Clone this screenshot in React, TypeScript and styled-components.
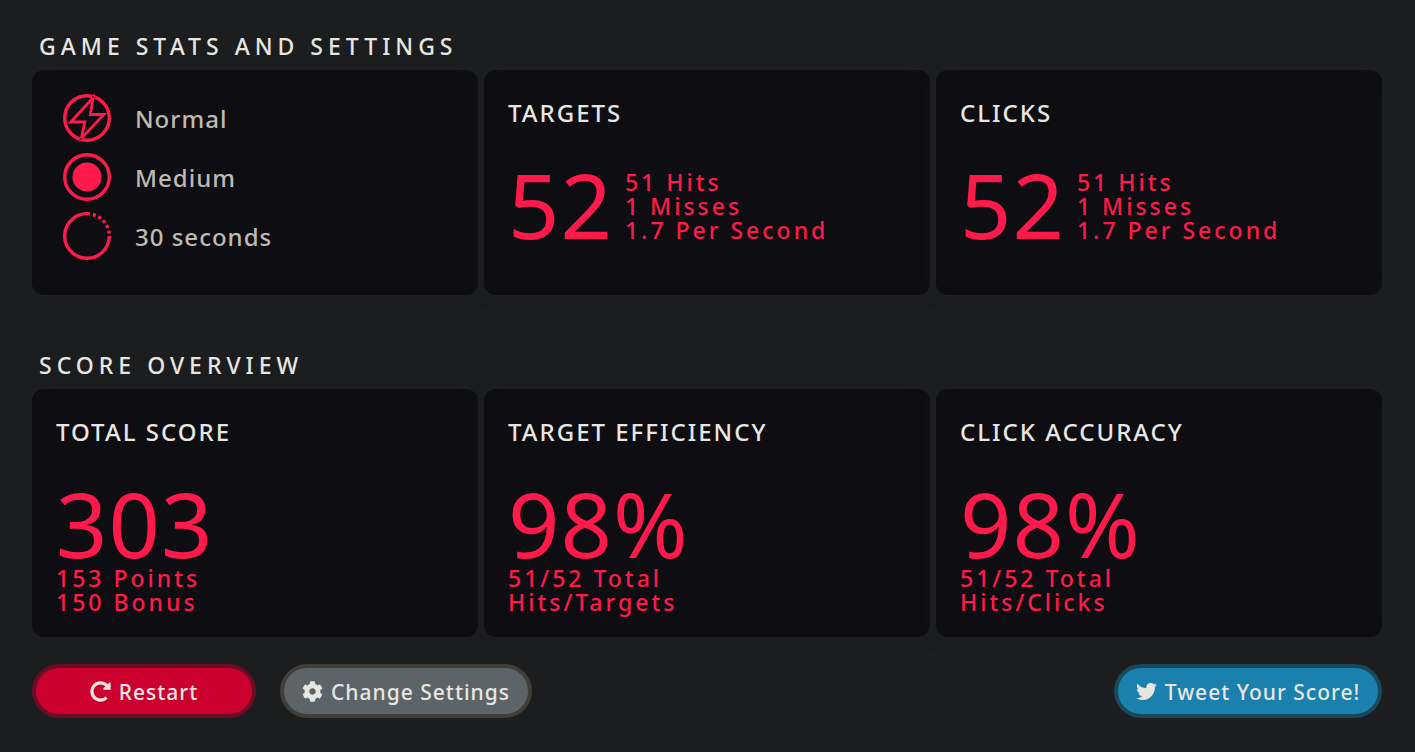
import React from "react";
import styled, { createGlobalStyle } from "styled-components";
import { FaCog, FaRedoAlt, FaTwitter } from "react-icons/fa";

const colors = {
  page: "#1b1d1e",
  card: "#0e0d12",
  accent: "#ff1a4b",
  heading: "#e8e6e1",
  muted: "#bfbab1",
};

const GlobalStyle = createGlobalStyle`
  * { box-sizing: border-box; }
  html { background: ${colors.page}; }
  body {
    margin: 0;
    color: ${colors.heading};
    font-family: "Noto Sans", "Open Sans", sans-serif;
    font-size: 24px;
    line-height: 24px;
  }
  h2, h3, p, ul { margin: 0; padding: 0; font-weight: 500; }
`;

const Page = styled.main`
  padding: 28px 33px 34px 32px;
`;

const Section = styled.section<{ $gap: number }>`
  margin-bottom: ${(p) => p.$gap}px;
`;

const SectionTitle = styled.h2`
  padding: 0 7px 6px;
  font-size: 23px;
  line-height: 36px;
  letter-spacing: 5px;
  text-transform: uppercase;
`;

const CardRow = styled.div`
  display: grid;
  grid-template-columns: repeat(3, 1fr);
  gap: 6px;
`;

const Card = styled.article<{ $tall?: boolean }>`
  min-height: ${(p) => (p.$tall ? 248 : 225)}px;
  padding: 24px 24px 23px;
  border-radius: 12px;
  background: ${colors.card};
  box-shadow: 0 0 16px rgba(36, 39, 40, 0.4);
`;

const CardTitle = styled.h3`
  margin-bottom: 36px;
  font-size: 24px;
  line-height: 38px;
  letter-spacing: 2px;
  text-transform: uppercase;
`;

const OptionList = styled.ul`
  display: flex;
  flex-direction: column;
  gap: 11px;
  padding-left: 7px;
  list-style: none;
`;

const Option = styled.li`
  display: flex;
  align-items: center;
  gap: 24px;
  color: ${colors.muted};
  font-weight: 500;
  letter-spacing: 1px;

  svg {
    width: 48px;
    height: 48px;
    fill: none;
    stroke: ${colors.accent};
    stroke-width: 3.4;
  }
`;

const OptionLabel = styled.span`
  padding-top: 2px;
`;

const Details = styled.p`
  font-size: 23px;
  line-height: 24px;
  letter-spacing: 3px;
  white-space: pre-line;
`;

const Stat = styled.div<{ $stacked?: boolean }>`
  display: flex;
  flex-direction: ${(p) => (p.$stacked ? "column" : "row")};
  gap: ${(p) => (p.$stacked ? 7 : 12)}px;
  color: ${colors.accent};

  ${Details} {
    padding-top: ${(p) => (p.$stacked ? 0 : 2)}px;
  }
`;

const Big = styled.p`
  font-size: 90px;
  line-height: 72px;
  letter-spacing: 1px;
  font-weight: 450;
`;

const Actions = styled.footer`
  display: flex;
  gap: 24px;
`;

const Button = styled.button<{ $bg: string; $edge: string; $width: number; $end?: boolean }>`
  display: flex;
  align-items: center;
  justify-content: center;
  gap: 8px;
  width: ${(p) => p.$width}px;
  height: 54px;
  margin-left: ${(p) => (p.$end ? "auto" : "0")};
  padding: 0;
  border: 4px solid ${(p) => p.$edge};
  border-radius: 27px;
  background: ${(p) => p.$bg};
  color: ${colors.heading};
  font: 500 21px/24px "Noto Sans", "Open Sans", sans-serif;
  letter-spacing: 1px;
  white-space: nowrap;
  cursor: pointer;

  svg {
    width: 21px;
    height: 21px;
  }
`;

const ButtonLabel = styled.span`
  padding-top: 2px;
`;

const BoltIcon = () => (
  <svg viewBox="0 0 48 48" aria-hidden="true">
    <circle cx="24" cy="24" r="22.3" />
    <path d="M30 3.8 7.8 28H21.8L18.4 44.2 41 20.5H27.4Z" strokeWidth="2.8" />
    <path d="M29 2.6 31.6 3.6M16.6 44.6 19.2 45.4" stroke={colors.card} strokeWidth="1" />
  </svg>
);

const TargetIcon = () => (
  <svg viewBox="0 0 48 48" aria-hidden="true">
    <circle cx="24" cy="24" r="22.3" />
    <circle cx="24" cy="24" r="14.5" fill={colors.accent} stroke="none" />
  </svg>
);

const TimerIcon = () => (
  <svg viewBox="0 0 48 48" aria-hidden="true">
    <path d="M46.3 24A22.3 22.3 0 1 1 27 1.9" />
    <path d="M29.8 2.5A22.3 22.3 0 0 1 46.2 22" strokeDasharray="3.1 2.8" />
  </svg>
);

const options = [
  { label: "Normal", Icon: BoltIcon },
  { label: "Medium", Icon: TargetIcon },
  { label: "30 seconds", Icon: TimerIcon },
];

const counts = [
  { title: "Targets", value: "52", details: "51 Hits\n1 Misses\n1.7 Per Second" },
  { title: "Clicks", value: "52", details: "51 Hits\n1 Misses\n1.7 Per Second" },
];

const scores = [
  { title: "Total Score", value: "303", details: "153 Points\n150 Bonus" },
  { title: "Target Efficiency", value: "98%", details: "51/52 Total\nHits/Targets" },
  { title: "Click Accuracy", value: "98%", details: "51/52 Total\nHits/Clicks" },
];

export default function App() {
  return (
    <>
      <GlobalStyle />
      <Page>
        <Section $gap={52}>
          <SectionTitle>Game Stats and Settings</SectionTitle>
          <CardRow>
            <Card>
              <OptionList>
                {options.map(({ label, Icon }) => (
                  <Option key={label}>
                    <Icon />
                    <OptionLabel>{label}</OptionLabel>
                  </Option>
                ))}
              </OptionList>
            </Card>
            {counts.map((c) => (
              <Card key={c.title}>
                <CardTitle>{c.title}</CardTitle>
                <Stat>
                  <Big>{c.value}</Big>
                  <Details>{c.details}</Details>
                </Stat>
              </Card>
            ))}
          </CardRow>
        </Section>
        <Section $gap={27}>
          <SectionTitle>Score Overview</SectionTitle>
          <CardRow>
            {scores.map((s) => (
              <Card key={s.title} $tall>
                <CardTitle>{s.title}</CardTitle>
                <Stat $stacked>
                  <Big>{s.value}</Big>
                  <Details>{s.details}</Details>
                </Stat>
              </Card>
            ))}
          </CardRow>
        </Section>
        <Actions>
          <Button type="button" $bg="#cc002e" $edge="#6b0e24" $width={224}>
            <FaRedoAlt aria-hidden="true" />
            <ButtonLabel>Restart</ButtonLabel>
          </Button>
          <Button type="button" $bg="#5c6468" $edge="#413e39" $width={252}>
            <FaCog aria-hidden="true" />
            <ButtonLabel>Change Settings</ButtonLabel>
          </Button>
          <Button type="button" $bg="#1a80ad" $edge="#1a485c" $width={268} $end>
            <FaTwitter aria-hidden="true" />
            <ButtonLabel>Tweet Your Score!</ButtonLabel>
          </Button>
        </Actions>
      </Page>
    </>
  );
}
